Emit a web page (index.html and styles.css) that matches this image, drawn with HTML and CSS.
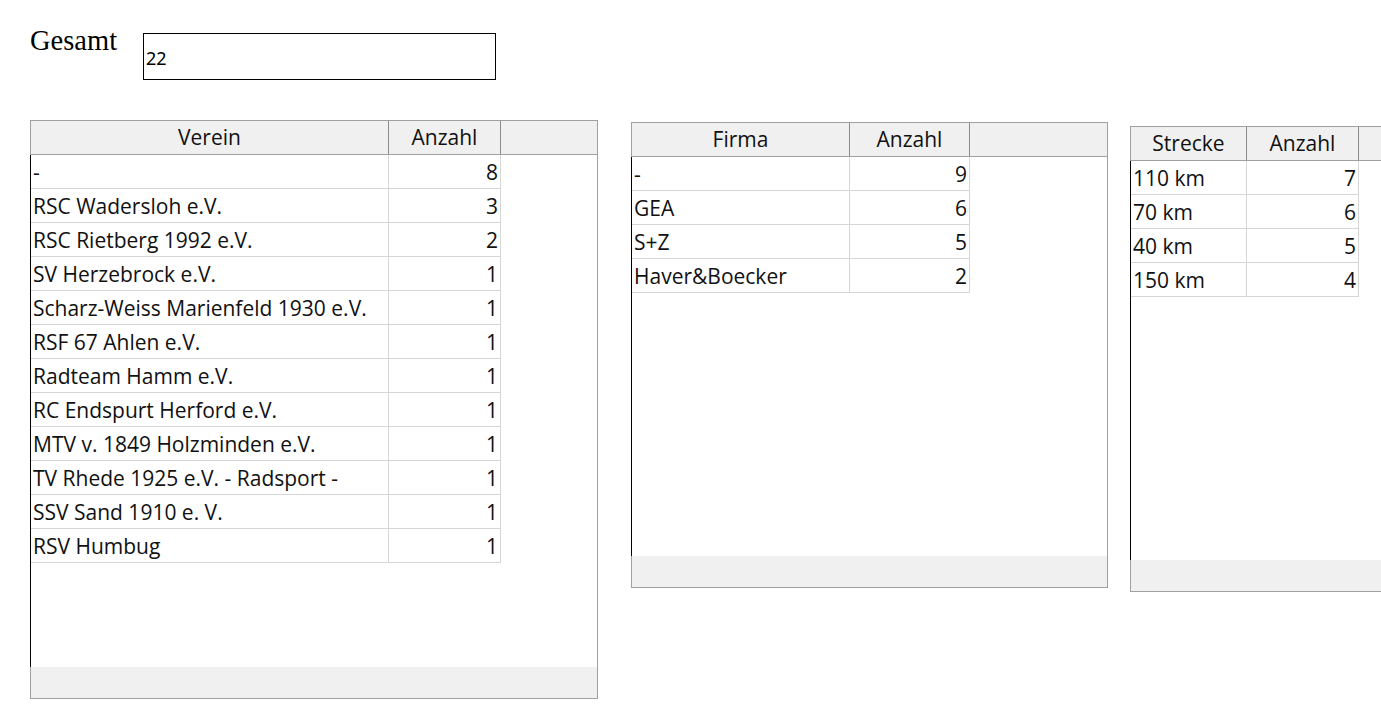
FILE: index.html
```html
<!DOCTYPE html>
<html lang="de">
<head>
<meta charset="utf-8">
<title>Statistik</title>
<link rel="stylesheet" href="styles.css">
</head>
<body>
<div class="page">
  <div class="total-row">
    <label class="total-label" for="gesamt">Gesamt</label>
    <input id="gesamt" class="total-input" type="text" value="22">
  </div>
  <div class="grids">
    <div class="grid grid-verein">
      <div class="grid-head">
        <div class="hcell c-name">Verein</div>
        <div class="hcell c-num">Anzahl</div>
        <div class="hcell c-fill"></div>
      </div>
      <div class="grid-body">
        <div class="row"><div class="cell c-name">-</div><div class="cell c-num">8</div></div>
        <div class="row"><div class="cell c-name">RSC Wadersloh e.V.</div><div class="cell c-num">3</div></div>
        <div class="row"><div class="cell c-name">RSC Rietberg 1992 e.V.</div><div class="cell c-num">2</div></div>
        <div class="row"><div class="cell c-name">SV Herzebrock e.V.</div><div class="cell c-num">1</div></div>
        <div class="row"><div class="cell c-name">Scharz-Weiss Marienfeld 1930 e.V.</div><div class="cell c-num">1</div></div>
        <div class="row"><div class="cell c-name">RSF 67 Ahlen e.V.</div><div class="cell c-num">1</div></div>
        <div class="row"><div class="cell c-name">Radteam Hamm e.V.</div><div class="cell c-num">1</div></div>
        <div class="row"><div class="cell c-name">RC Endspurt Herford e.V.</div><div class="cell c-num">1</div></div>
        <div class="row"><div class="cell c-name">MTV v. 1849 Holzminden e.V.</div><div class="cell c-num">1</div></div>
        <div class="row"><div class="cell c-name">TV Rhede 1925 e.V. - Radsport -</div><div class="cell c-num">1</div></div>
        <div class="row"><div class="cell c-name">SSV Sand 1910 e. V.</div><div class="cell c-num">1</div></div>
        <div class="row"><div class="cell c-name">RSV Humbug</div><div class="cell c-num">1</div></div>
      </div>
      <div class="grid-foot"></div>
    </div>

    <div class="grid grid-firma">
      <div class="grid-head">
        <div class="hcell c-name">Firma</div>
        <div class="hcell c-num">Anzahl</div>
        <div class="hcell c-fill"></div>
      </div>
      <div class="grid-body">
        <div class="row"><div class="cell c-name">-</div><div class="cell c-num">9</div></div>
        <div class="row"><div class="cell c-name">GEA</div><div class="cell c-num">6</div></div>
        <div class="row"><div class="cell c-name">S+Z</div><div class="cell c-num">5</div></div>
        <div class="row"><div class="cell c-name">Haver&amp;Boecker</div><div class="cell c-num">2</div></div>
      </div>
      <div class="grid-foot"></div>
    </div>

    <div class="grid grid-strecke">
      <div class="grid-head">
        <div class="hcell c-name">Strecke</div>
        <div class="hcell c-num">Anzahl</div>
        <div class="hcell c-fill"></div>
      </div>
      <div class="grid-body">
        <div class="row"><div class="cell c-name">110 km</div><div class="cell c-num">7</div></div>
        <div class="row"><div class="cell c-name">70 km</div><div class="cell c-num">6</div></div>
        <div class="row"><div class="cell c-name">40 km</div><div class="cell c-num">5</div></div>
        <div class="row"><div class="cell c-name">150 km</div><div class="cell c-num">4</div></div>
      </div>
      <div class="grid-foot"></div>
    </div>
  </div>
</div>
</body>
</html>
```

FILE: styles.css
```css
html, body {
  margin: 0;
  padding: 0;
  background: #fff;
  overflow: hidden;
}

.page {
  padding: 26px 0 0 30px;
  width: 1600px;
}

.total-row {
  display: flex;
  align-items: flex-start;
}

.total-label {
  font-family: "Liberation Serif", "Times New Roman", serif;
  font-size: 28.5px;
  line-height: 30px;
  color: #000;
  width: 113px;
}

.total-input {
  box-sizing: border-box;
  margin-top: 7px;
  width: 353px;
  height: 47px;
  border: 1px solid #000;
  padding: 2px 2px 0;
  font-family: "Noto Sans", "Open Sans", sans-serif;
  font-size: 18px;
  color: #000;
  background: #fff;
  outline: none;
}

.grids {
  display: flex;
  align-items: flex-start;
  margin-top: 40px;
}

.grid {
  box-sizing: border-box;
  display: flex;
  flex-direction: column;
  border-top: 1px solid #a0a0a0;
  border-right: 1px solid #a0a0a0;
  border-bottom: 1px solid #a0a0a0;
  font-family: "Open Sans", "Noto Sans", sans-serif;
  font-size: 21px;
  color: #111;
  flex: none;
}

.grid-verein {
  width: 568px;
  height: 579px;
}

.grid-firma {
  width: 477px;
  height: 466px;
  margin-left: 33px;
  margin-top: 2px;
}

.grid-strecke {
  width: 477px;
  height: 466px;
  margin-left: 22px;
  margin-top: 6px;
}

.grid-head {
  display: flex;
  height: 34px;
  box-sizing: border-box;
  background: #f0f0f0;
  border-left: 1px solid #a0a0a0;
  border-bottom: 1px solid #a0a0a0;
  flex: none;
}

.hcell {
  box-sizing: border-box;
  border-right: 1px solid #8c8c8c;
  text-align: center;
  line-height: 33px;
  white-space: nowrap;
  flex: none;
}

.hcell.c-fill {
  border-right: none;
  flex: 1;
}

.grid-body {
  flex: 1;
  border-left: 1px solid #000;
  overflow: hidden;
}

.row {
  display: flex;
  height: 34px;
  box-sizing: border-box;
  border-bottom: 1px solid #d6d6d6;
  width: max-content;
}

.cell {
  box-sizing: border-box;
  border-right: 1px solid #d6d6d6;
  line-height: 35px;
  white-space: nowrap;
  overflow: hidden;
  flex: none;
}

.cell.c-name {
  padding-left: 2px;
}

.cell.c-num {
  text-align: right;
  padding-right: 2px;
}

.grid-verein .c-name { width: 358px; }
.grid-verein .c-num { width: 112px; }
.grid-firma .c-name { width: 218px; }
.grid-firma .c-num { width: 120px; }
.grid-strecke .c-name { width: 116px; }
.grid-strecke .c-num { width: 112px; }

.grid-foot {
  height: 31px;
  flex: none;
  background: #f0f0f0;
  border-left: 1px solid #a0a0a0;
}
```
